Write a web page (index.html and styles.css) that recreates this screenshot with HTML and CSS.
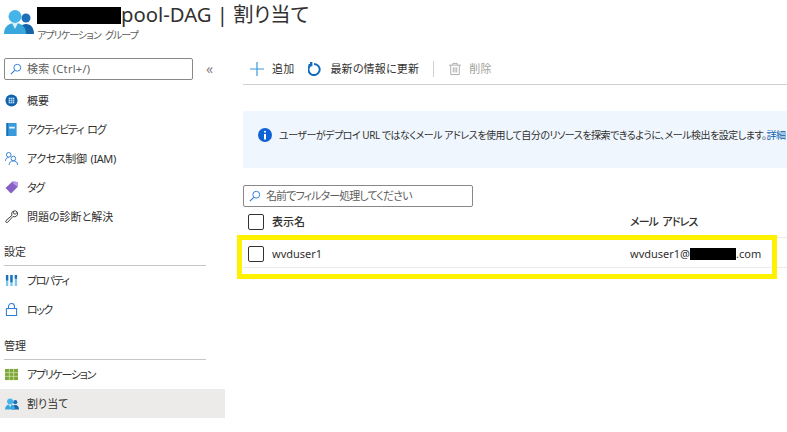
FILE: index.html
```html
<!DOCTYPE html>
<html lang="ja">
<head>
<meta charset="utf-8">
<title>割り当て</title>
<link rel="stylesheet" href="styles.css">
</head>
<body>
<svg class="defs" width="0" height="0" aria-hidden="true">
  <symbol id="users" viewBox="0 0 30 24">
    <circle cx="22" cy="8" r="4.500" fill="#1f6fb8"/>
    <path d="M15 24c0-6 2-10 7-10s8 4 8 10z" fill="#1565a8"/>
    <circle cx="11" cy="6.500" r="6.500" fill="#45b4e8"/>
    <path d="M0 24c0-7 4-11 11-11s11 4 11 11z" fill="#3aa7dc"/>
    <path d="M8 13l3 6 3-6z" fill="#d5f1fb"/>
  </symbol>
</svg>
<div class="page">
  <header class="head">
    <svg class="head-icon"><use href="#users"/></svg>
    <div>
      <h1 class="title"><span class="redact redact-title"></span>pool-DAG | 割り当て</h1>
      <div class="subtitle">アプリケーション グループ</div>
    </div>
  </header>
  <div class="body">
    <aside class="side">
      <div class="side-search">
        <div class="box search-box">
          <svg class="lens" viewBox="0 0 14 14"><circle cx="8.500" cy="5.500" r="4" fill="none" stroke="#2b7cd3" stroke-width="1.100"/><path d="M5.500 8.500L1 13" stroke="#2b7cd3" stroke-width="1.200"/></svg>
          <span class="search-text">検索 (Ctrl+/)</span>
        </div>
        <span class="collapse">«</span>
      </div>
      <nav class="nav">
        <a class="item"><svg class="ico" viewBox="0 0 14 14"><circle cx="7" cy="7" r="6.500" fill="#0f62ad"/><path d="M4 4h6v6H4z" fill="#cfe6fa"/><path d="M6 4v6M8 4v6M4 6h6M4 8h6" stroke="#0f62ad" stroke-width=".6"/></svg>概要</a>
        <a class="item kana"><svg class="ico" viewBox="0 0 14 14"><path d="M1.500 0h11v14h-11z" fill="#3a9bdc"/><path d="M1.500 0h2v14h-2z" fill="#1d6fb5"/><path d="M4.500 4h6v2h-6z" fill="#e8f4fc"/></svg>アクティビティ ログ</a>
        <a class="item kana-light"><svg class="ico" viewBox="0 0 14 14" fill="none" stroke="#2b7cd3" stroke-width="1"><circle cx="4" cy="3" r="2.500"/><path d="M.5 9.500c0-2.500 1.500-3.500 3.500-3.500"/><circle cx="9" cy="7" r="2.500"/><path d="M4.500 14c0-3 2-4.500 4.500-4.500s4.500 1.500 4.500 4.500"/></svg>アクセス制御 (IAM)</a>
        <a class="item kana-tight"><svg class="ico" viewBox="0 0 14 14"><path d="M8 .5L13.500 1v5.500L6.500 13.500.5 7.500z" fill="#8661c5"/><path d="M8 .5L13.500 1v5.500L9 3z" fill="#b796e8"/></svg>タグ</a>
        <a class="item"><svg class="ico" viewBox="0 0 14 14" fill="none" stroke="#333" stroke-width="1"><path d="M9 1.200a3.500 3.500 0 0 1 4.300 1.300L11 4.500l-1.500-.5-.5-1.500zM9 1.200a3.500 3.500 0 0 0-1.500 4.500L1 11.500a1.300 1.300 0 0 0 1.800 1.800L8.500 7a3.500 3.500 0 0 0 4.800-4.500"/></svg>問題の診断と解決</a>
        <div class="section">設定</div>
        <a class="item kana-tight"><svg class="ico" viewBox="0 0 14 14"><path d="M1 1h2.500v12H1zM5.700 1h2.500v12H5.700zM10.500 1H13v12h-2.500z" fill="#7cc6ef"/><path d="M1 1h2.500v6H1zM5.700 1h2.500v8H5.700zM10.500 1H13v4h-2.500z" fill="#1f6fb8"/></svg>プロパティ</a>
        <a class="item kana-tight"><svg class="ico" viewBox="0 0 14 14" fill="none" stroke="#2b7cd3" stroke-width="1.100"><rect x="1.500" y="6" width="11" height="7.500"/><path d="M3.800 6V3.800a3.200 3.200 0 0 1 6.400 0V6"/></svg>ロック</a>
        <div class="section section-low">管理</div>
        <a class="item kana"><svg class="ico" viewBox="0 0 14 14"><path d="M0 1h14v12H0z" fill="#7fa83a"/><path d="M4.700 1v12M9.300 1v12M0 5h14M0 9h14" stroke="#dcebc0" stroke-width=".7"/></svg>アプリケーション</a>
        <a class="item item-on"><svg class="ico ico-users"><use href="#users"/></svg>割り当て</a>
      </nav>
    </aside>
    <main class="main">
      <div class="toolbar">
        <span class="tool"><svg class="t-ico" viewBox="0 0 14 14"><path d="M7 0v14M0 7h14" stroke="#3d97dc" stroke-width="1.200"/></svg>追加</span>
        <span class="tool"><svg class="t-ico" viewBox="0 0 14 14" fill="none"><path d="M3 2.800a5.600 5.600 0 1 0 3-.9" stroke="#0f6cbd" stroke-width="2"/><path d="M2 0h2.400v4.200H.5V2h1.500z" fill="#0f6cbd"/></svg>最新の情報に更新</span>
        <span class="sep"></span>
        <span class="tool tool-off"><svg class="t-ico trash" viewBox="0 0 14 14" fill="none" stroke="#9a9a9a" stroke-width=".9"><path d="M0 2.500h14M4.500 2.500V.5h5v2M2 2.500V13.500h10V2.500M5 5v6M7 5v6M9 5v6"/></svg>削除</span>
      </div>
      <div class="info">
        <svg class="info-ico" viewBox="0 0 14 14"><circle cx="7" cy="7" r="7" fill="#0f62d6"/><circle cx="7" cy="3.800" r="1" fill="#fff"/><path d="M6 6h2v5.500H6z" fill="#fff"/></svg>
        <span class="info-text">ユーザーがデプロイ URL ではなくメール アドレスを使用して自分のリソースを探索できるように、メール検出を設定します。<a class="link">詳細</a></span>
      </div>
      <div class="box filter-box">
        <svg class="lens" viewBox="0 0 14 14"><circle cx="8.500" cy="5.500" r="4" fill="none" stroke="#2b7cd3" stroke-width="1.100"/><path d="M5.500 8.500L1 13" stroke="#2b7cd3" stroke-width="1.200"/></svg>
        <span class="filter-text">名前でフィルター処理してください</span>
      </div>
      <div class="row row-head">
        <span class="check"></span>
        <span class="col-name">表示名</span>
        <span class="col-mail mail-head">メール アドレス</span>
      </div>
      <div class="row row-data">
        <span class="check"></span>
        <span class="col-name">wvduser1</span>
        <span class="col-mail">wvduser1@<span class="redact redact-mail"></span>.com</span>
      </div>
      <div class="highlight"></div>
    </main>
  </div>
</div>
</body>
</html>
```
FILE: styles.css
```css
* { box-sizing: border-box; }
html, body { margin: 0; padding: 0; }
body {
  width: 787px;
  height: 432px;
  overflow: hidden;
  background: #fff;
  color: #323130;
  font: 11px/14px "Noto Sans", "Noto Sans CJK JP", sans-serif;
  font-feature-settings: "palt";
}
.defs { position: absolute; }
.page { width: 787px; height: 432px; overflow: hidden; }

.head { display: flex; height: 58px; padding: 0 0 0 4px; }
.head-icon { width: 30px; height: 24px; margin-top: 10px; margin-right: 3px; flex: none; }
.title {
  margin: 0;
  font-weight: 400;
  font-size: 20.3px;
  line-height: 28px;
  color: #323130;
  white-space: nowrap;
}
.redact { display: inline-block; background: #000; }
.redact-title { width: 84px; height: 17px; vertical-align: -2px; }
.subtitle { font-size: 10px; line-height: 14px; color: #605e5c; letter-spacing: -.95px; word-spacing: 2.5px; }

.body { display: flex; height: 374px; }
.side { width: 225px; flex: none; }
.side-search { display: flex; align-items: center; padding-left: 4px; height: 22px; margin-bottom: 6px; }
.box {
  display: flex;
  align-items: center;
  border: 1px solid #8a8886;
  border-radius: 2px;
  color: #605e5c;
  font-size: 11px;
  background: #fff;
}
.search-box { width: 189px; height: 22px; padding-left: 5px; }
.search-text { letter-spacing: .3px; }
.lens { width: 12px; height: 12px; margin-right: 5px; flex: none; }
.collapse { margin-left: 13px; color: #8a8886; font-size: 14px; }

.nav { display: flex; flex-direction: column; }
.item {
  display: flex;
  align-items: center;
  height: 29px;
  padding-left: 5px;
  color: #323130;
}
.kana { letter-spacing: -1.3px; word-spacing: 2.5px; }
.kana-light { letter-spacing: -.4px; word-spacing: 1.5px; }
.kana-tight { letter-spacing: -1.5px; }
.ico { width: 13px; height: 13px; margin-right: 9px; flex: none; }
.ico-users { width: 14px; height: 12px; margin-right: 8px; }
.item-on { background: #edebe9; }
.section {
  margin: 6px 19px 0 4px;
  height: 29px;
  padding-top: 8px;
  border-bottom: 1px solid #c8c6c4;
  color: #323130;
  font-size: 11px;
  line-height: 14px;
}
.section-low { margin-top: 7px; }

.main { position: relative; flex: 1; min-width: 0; padding-left: 18px; }
.toolbar {
  display: flex;
  align-items: center;
  height: 27px;
  border-bottom: 1px solid #d2d0ce;
  padding: 0 0 5px 7px;
}
.tool { display: flex; align-items: center; margin-right: 14px; color: #323130; letter-spacing: .2px; }
.t-ico { width: 14px; height: 14px; margin-right: 8px; flex: none; }
.trash { width: 12px; height: 14px; }
.tool-off { color: #a19f9d; }
.sep { width: 1px; height: 16px; background: #d2d0ce; margin-right: 15px; }
.info {
  display: flex;
  align-items: flex-start;
  height: 57px;
  margin-top: 26px;
  padding: 17px 0 0 15px;
  background: #eff6fe;
  border-radius: 2px;
  white-space: nowrap;
  overflow: hidden;
}
.info-ico { width: 14px; height: 14px; margin-right: 7px; flex: none; }
.info-text { font-size: 10px; letter-spacing: -.5px; }
.link { color: #0f62ad; }
.filter-box { width: 230px; height: 22px; margin-top: 17px; padding-left: 5px; }
.filter-text { letter-spacing: -.9px; }
.row { display: flex; align-items: center; padding-left: 5px; }
.row-head { height: 31px; font-weight: 500; border-bottom: 1px solid #edebe9; }
.row-data { height: 30px; padding-top: 2px; border-bottom: 1px solid #edebe9; }
.check { width: 16px; height: 16px; border: 1px solid #323130; border-radius: 2px; flex: none; margin-right: 8px; }
.col-name { width: 358px; flex: none; }
.mail-head { letter-spacing: -.9px; word-spacing: 2.5px; }
.redact-mail { width: 46px; height: 12px; vertical-align: -2px; }
.highlight {
  position: absolute;
  left: 12px;
  top: 177px;
  width: 540px;
  height: 44px;
  border: 5px solid #fff200;
}
```
